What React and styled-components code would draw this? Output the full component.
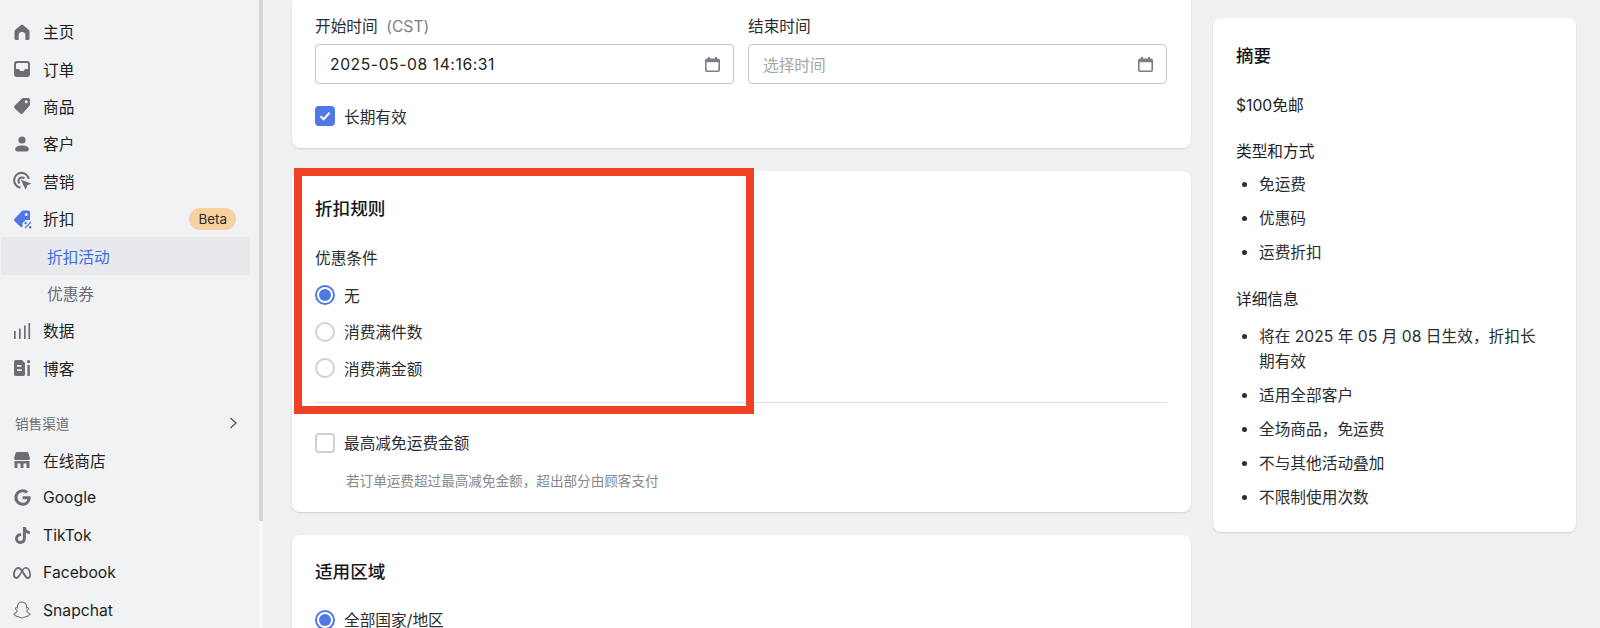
import React from 'react';
import styled, { createGlobalStyle } from 'styled-components';
import { FaGoogle, FaTiktok, FaMeta, FaSnapchat } from 'react-icons/fa6';

const GlobalStyle = createGlobalStyle`
  html, body {
    margin: 0;
    padding: 0;
    background: #f0f1f3;
  }
  * {
    box-sizing: border-box;
  }
`;

const Page = styled.div`
  display: flex;
  width: 1600px;
  height: 628px;
  overflow: hidden;
  background: #f0f1f3;
  color: #202223;
  font-family: Inter, 'Noto Sans CJK SC', sans-serif;
  font-size: 15.7px;
  position: relative;
`;

const Sidebar = styled.nav`
  display: flex;
  flex-direction: column;
  flex: none;
  width: 259px;
  padding-top: 13px;
  background: #f1f2f4;
`;

const ScrollRail = styled.div`
  flex: none;
  width: 4px;
  background: #f8f8f9;
`;

const ScrollThumb = styled.div`
  height: 521px;
  background: #d6d7da;
`;

const NavRow = styled.div`
  display: flex;
  align-items: center;
  flex: none;
  height: 37.4px;
  padding: 0 23px 0 12px;
  gap: 11px;
  color: #1d1f21;

  svg {
    flex: none;
    width: 20px;
    height: 20px;
    color: #6b6e74;
  }
`;

const BrandSlot = styled.span`
  display: flex;
  align-items: center;
  justify-content: center;
  flex: none;
  width: 20px;

  && svg {
    width: ${({ $size }) => $size}px;
    height: ${({ $size }) => $size}px;
  }
`;

const SubRow = styled.div`
  display: flex;
  align-items: center;
  flex: none;
  height: 37.4px;
  margin: 0 9px 0 1px;
  padding-left: 46px;
  border-radius: 3px;
  background: ${({ $active }) => ($active ? '#e8e9ec' : 'transparent')};
  color: ${({ $active }) => ($active ? '#3a6ee0' : '#6b6e74')};
`;

const NavLabel = styled.span`
  flex: 1;
`;

const Badge = styled.span`
  padding: 0 9px;
  height: 22px;
  line-height: 22px;
  border-radius: 11px;
  background: #f8d1a1;
  font-size: 13.4px;
  color: #2a2a2a;
`;

const SectionRow = styled.div`
  display: flex;
  align-items: center;
  justify-content: space-between;
  flex: none;
  height: 37.4px;
  margin-top: 17.5px;
  padding: 0 20px 0 15px;
  font-size: 13.6px;
  color: #6b6e74;
`;

const Main = styled.main`
  display: flex;
  align-items: flex-start;
  flex: 1;
  gap: 22px;
  padding-left: 29px;
`;

const Column = styled.div`
  display: flex;
  flex-direction: column;
  flex: none;
  width: 899px;
  gap: 23px;
`;

const Card = styled.section`
  padding: 24px 24px 21px 23px;
  background: #fff;
  border-radius: 8px;
  box-shadow: 0 1px 2px rgba(60, 66, 80, 0.18);
`;

const TopCard = styled(Card)`
  padding-top: 15px;
  padding-bottom: 20px;
  border-radius: 0 0 8px 8px;
`;

const Title = styled.h2`
  margin: ${({ $top }) => $top || 0}px 0 0;
  font-size: 17.6px;
  line-height: 26px;
  font-weight: 500;
  color: #15171a;
`;

const DateGrid = styled.div`
  display: grid;
  grid-template-columns: 419px 419px;
  gap: 14px;
`;

const FieldLabel = styled.div`
  line-height: 24px;
  margin-top: ${({ $top }) => $top || 0}px;
  color: #2a2c2f;
`;

const Hint = styled.span`
  margin-left: 4px;
  color: #7c8086;
`;

const DateInput = styled.div`
  display: flex;
  align-items: center;
  justify-content: space-between;
  height: 40px;
  margin-top: 5px;
  padding: 0 13px 0 14px;
  border: 1px solid #c4c7cc;
  border-radius: 4px;
  letter-spacing: ${({ $empty }) => ($empty ? 0 : 0.57)}px;
  color: ${({ $empty }) => ($empty ? '#a3a6ab' : '#202223')};

  svg {
    flex: none;
    width: 15px;
    height: 15px;
    color: #7b7f85;
  }
`;

const OptionRow = styled.div`
  display: flex;
  align-items: center;
  height: ${({ $height }) => $height || 24}px;
  margin-top: ${({ $top }) => $top || 0}px;
  gap: 9px;
  color: #2a2c2f;
`;

const CheckBox = styled.span`
  display: flex;
  align-items: center;
  justify-content: center;
  flex: none;
  width: 20px;
  height: 20px;
  border-radius: 4px;
  border: ${({ $checked }) => ($checked ? 'none' : '2px solid #cfd1d5')};
  background: ${({ $checked }) => ($checked ? '#4f78e6' : '#fff')};

  svg {
    width: 14px;
    height: 14px;
  }
`;

const Radio = styled.span`
  display: flex;
  align-items: center;
  justify-content: center;
  flex: none;
  width: 20px;
  height: 20px;
  border-radius: 50%;
  border: 2px solid ${({ $checked }) => ($checked ? '#4f78e6' : '#cfd1d5')};

  &::after {
    content: '';
    width: 12px;
    height: 12px;
    border-radius: 50%;
    background: ${({ $checked }) => ($checked ? '#4f78e6' : 'transparent')};
  }
`;

const Divider = styled.hr`
  margin: 15px 0 28px;
  border: 0;
  border-top: 1px solid #dfe0e3;
`;

const HelpText = styled.p`
  margin: 16px 0 0 31px;
  font-size: 13.6px;
  line-height: 20px;
  color: #85888e;
`;

const SummaryCard = styled.aside`
  flex: none;
  width: 363px;
  margin-top: 18px;
  padding: 25px 25px 22px 23px;
  background: #fff;
  border-radius: 8px;
  box-shadow: 0 1px 2px rgba(60, 66, 80, 0.18);
`;

const SummaryText = styled.div`
  line-height: 24px;
  margin-top: ${({ $top }) => $top}px;
  color: #202223;
`;

const SummaryList = styled.ul`
  display: flex;
  flex-direction: column;
  gap: 9px;
  margin: ${({ $top }) => $top}px 0 0;
  padding-left: 23px;
  line-height: 25px;
  color: #2a2c2f;
`;

const Highlight = styled.div`
  position: absolute;
  left: 294px;
  top: 168px;
  width: 460px;
  height: 246px;
  border: 8px solid #ef4123;
  pointer-events: none;
`;

const HomeIcon = () => (
  <svg viewBox="0 0 20 20" fill="currentColor">
    <path d="M2.5 9.5Q2.5 8.6 3.1 8L9 2.9Q10 2 11 2.9L16.9 8Q17.5 8.6 17.5 9.5V16.5Q17.5 18 16 18H13.4V13.4A3.4 3.4 0 0 0 6.6 13.4V18H4Q2.5 18 2.5 16.5Z" />
  </svg>
);

const InboxIcon = () => (
  <svg viewBox="0 0 20 20" fill="currentColor">
    <path
      fillRule="evenodd"
      d="M5 2H15Q18 2 18 5V15Q18 18 15 18H5Q2 18 2 15V5Q2 2 5 2ZM5.2 4Q4 4 4 5.2V10H7L8.4 12H11.6L13 10H16V5.2Q16 4 14.8 4Z"
    />
  </svg>
);

const TagIcon = () => (
  <svg viewBox="0 0 20 20" fill="currentColor">
    <path
      fillRule="evenodd"
      d="M11.5 2H16.5Q18 2 18 3.5V8.5Q18 9.3 17.5 9.8L10.6 17.4Q9.4 18.6 8.2 17.6L2.6 12.2Q1.4 11 2.5 9.8L10 2.6Q10.6 2 11.5 2ZM14.3 4.3A1.5 1.5 0 1 0 14.3 7.3A1.5 1.5 0 1 0 14.3 4.3Z"
    />
  </svg>
);

const PersonIcon = () => (
  <svg viewBox="0 0 20 20" fill="currentColor">
    <circle cx="10" cy="6" r="3.6" />
    <path d="M3.2 15.2C3.2 12.8 6 11.4 10 11.4S16.8 12.8 16.8 15.2V15.6Q16.8 17.4 15 17.4H5Q3.2 17.4 3.2 15.6Z" />
  </svg>
);

const TargetIcon = () => (
  <svg viewBox="0 0 20 20" fill="none" stroke="currentColor" strokeWidth="2.1">
    <path d="M8.4 16.6A7.4 7.4 0 1 1 16.8 8" />
    <path d="M7.6 12.4A3.4 3.4 0 1 1 12.4 7.4" />
    <path d="M8.8 8.8L19.4 12.4L15.4 14.2L13.6 18.8Z" fill="currentColor" stroke="none" />
  </svg>
);

const DiscountIcon = () => (
  <svg viewBox="0 0 20 20" style={{ color: '#4f78e6' }}>
    <path
      fill="currentColor"
      fillRule="evenodd"
      d="M11.5 1.5H16.5Q18 1.5 18 3V11H13.5L10.5 14V18.2Q9.3 18.6 8.2 17.6L2.6 12.2Q1.4 11 2.5 9.8L10 2.1Q10.6 1.5 11.5 1.5ZM14.2 4A1.5 1.5 0 1 0 14.2 7A1.5 1.5 0 1 0 14.2 4Z"
    />
    <path d="M13 19L19 13" stroke="currentColor" strokeWidth="1.2" />
    <circle cx="13.6" cy="14" r="1.2" fill="currentColor" />
    <circle cx="18.2" cy="18.2" r="1.2" fill="currentColor" />
  </svg>
);

const BarsIcon = () => (
  <svg viewBox="0 0 20 20" fill="currentColor">
    <rect x="2" y="10" width="1.7" height="8" />
    <rect x="7" y="7.5" width="1.7" height="10.5" />
    <rect x="12" y="4.5" width="1.7" height="13.5" />
    <rect x="16.4" y="2" width="1.7" height="16" />
  </svg>
);

const BlogIcon = () => (
  <svg viewBox="0 0 20 20" fill="currentColor">
    <path
      fillRule="evenodd"
      d="M3.5 2H10L13 5V16.5Q13 18 11.5 18H3.5Q2 18 2 16.5V3.5Q2 2 3.5 2ZM5 7V8.8H9.5V7ZM5 11.2V13H10V11.2Z"
    />
    <circle cx="16.6" cy="3.6" r="1.6" />
    <rect x="15.4" y="7" width="2.4" height="11" />
  </svg>
);

const StoreIcon = () => (
  <svg viewBox="0 0 20 20" fill="currentColor">
    <path d="M5 2H15Q16 2 16.4 3L18 8.2Q18 10 16 10H4Q2 10 2 8.2L3.6 3Q4 2 5 2Z" />
    <path d="M2.5 11H17.5V18H14.5V13.5H11.5V18H8.5V13.5H5.5V18H2.5Z" />
  </svg>
);

const ChevronIcon = () => (
  <svg width="12" height="12" viewBox="0 0 12 12" fill="none" stroke="#55585d" strokeWidth="1.3">
    <path d="M3.5 1L9 6L3.5 11" />
  </svg>
);

const CalendarIcon = () => (
  <svg viewBox="0 0 15 15" fill="currentColor">
    <path
      fillRule="evenodd"
      d="M3 0H5V1.5H10V0H12V1.5H13Q15 1.5 15 3.5V13Q15 15 13 15H2Q0 15 0 13V3.5Q0 1.5 2 1.5H3ZM1.6 5.2V12.6Q1.6 13.4 2.4 13.4H12.6Q13.4 13.4 13.4 12.6V5.2Z"
    />
  </svg>
);

const CheckIcon = () => (
  <svg viewBox="0 0 14 14" fill="none" stroke="#fff" strokeWidth="2">
    <path d="M2.5 7.2L5.6 10.2L11.5 3.8" />
  </svg>
);

const topNav = [
  { label: '主页', icon: <HomeIcon /> },
  { label: '订单', icon: <InboxIcon /> },
  { label: '商品', icon: <TagIcon /> },
  { label: '客户', icon: <PersonIcon /> },
  { label: '营销', icon: <TargetIcon /> },
];

const midNav = [
  { label: '数据', icon: <BarsIcon /> },
  { label: '博客', icon: <BlogIcon /> },
];

const channels = [
  { label: '在线商店', icon: <StoreIcon /> },
  { label: 'Google', icon: <BrandSlot $size={17}><FaGoogle /></BrandSlot> },
  { label: 'TikTok', icon: <BrandSlot $size={17}><FaTiktok /></BrandSlot> },
  { label: 'Facebook', icon: <BrandSlot $size={18}><FaMeta /></BrandSlot> },
  { label: 'Snapchat', icon: <BrandSlot $size={18}><FaSnapchat /></BrandSlot> },
];

const typeItems = ['免运费', '优惠码', '运费折扣'];

const detailItems = [
  '将在 2025 年 05 月 08 日生效，折扣长期有效',
  '适用全部客户',
  '全场商品，免运费',
  '不与其他活动叠加',
  '不限制使用次数',
];

const renderNav = (items) =>
  items.map((item) => (
    <NavRow key={item.label}>
      {item.icon}
      <NavLabel>{item.label}</NavLabel>
    </NavRow>
  ));

export default function App() {
  return (
    <Page>
      <GlobalStyle />
      <Sidebar>
        {renderNav(topNav)}
        <NavRow>
          <DiscountIcon />
          <NavLabel>折扣</NavLabel>
          <Badge>Beta</Badge>
        </NavRow>
        <SubRow $active>折扣活动</SubRow>
        <SubRow>优惠券</SubRow>
        {renderNav(midNav)}
        <SectionRow>
          销售渠道
          <ChevronIcon />
        </SectionRow>
        {renderNav(channels)}
      </Sidebar>
      <ScrollRail>
        <ScrollThumb />
      </ScrollRail>
      <Main>
        <Column>
          <TopCard>
            <DateGrid>
              <div>
                <FieldLabel>
                  开始时间 <Hint>(CST)</Hint>
                </FieldLabel>
                <DateInput>
                  2025-05-08 14:16:31
                  <CalendarIcon />
                </DateInput>
              </div>
              <div>
                <FieldLabel>结束时间</FieldLabel>
                <DateInput $empty>
                  选择时间
                  <CalendarIcon />
                </DateInput>
              </div>
            </DateGrid>
            <OptionRow $top={20}>
              <CheckBox $checked>
                <CheckIcon />
              </CheckBox>
              长期有效
            </OptionRow>
          </TopCard>
          <Card>
            <Title $top={1}>折扣规则</Title>
            <FieldLabel $top={25}>优惠条件</FieldLabel>
            <OptionRow $top={6} $height={36.5}>
              <Radio $checked />无
            </OptionRow>
            <OptionRow $height={36.5}>
              <Radio />
              消费满件数
            </OptionRow>
            <OptionRow $height={36.5}>
              <Radio />
              消费满金额
            </OptionRow>
            <Divider />
            <OptionRow>
              <CheckBox />
              最高减免运费金额
            </OptionRow>
            <HelpText>若订单运费超过最高减免金额，超出部分由顾客支付</HelpText>
          </Card>
          <Card>
            <Title>适用区域</Title>
            <OptionRow $top={17} $height={36.5}>
              <Radio $checked />
              全部国家/地区
            </OptionRow>
          </Card>
        </Column>
        <SummaryCard>
          <Title>摘要</Title>
          <SummaryText $top={25}>$100免邮</SummaryText>
          <SummaryText $top={22}>类型和方式</SummaryText>
          <SummaryList $top={8}>
            {typeItems.map((item) => (
              <li key={item}>{item}</li>
            ))}
          </SummaryList>
          <SummaryText $top={23}>详细信息</SummaryText>
          <SummaryList $top={12}>
            {detailItems.map((item) => (
              <li key={item}>{item}</li>
            ))}
          </SummaryList>
        </SummaryCard>
      </Main>
      <Highlight />
    </Page>
  );
}
